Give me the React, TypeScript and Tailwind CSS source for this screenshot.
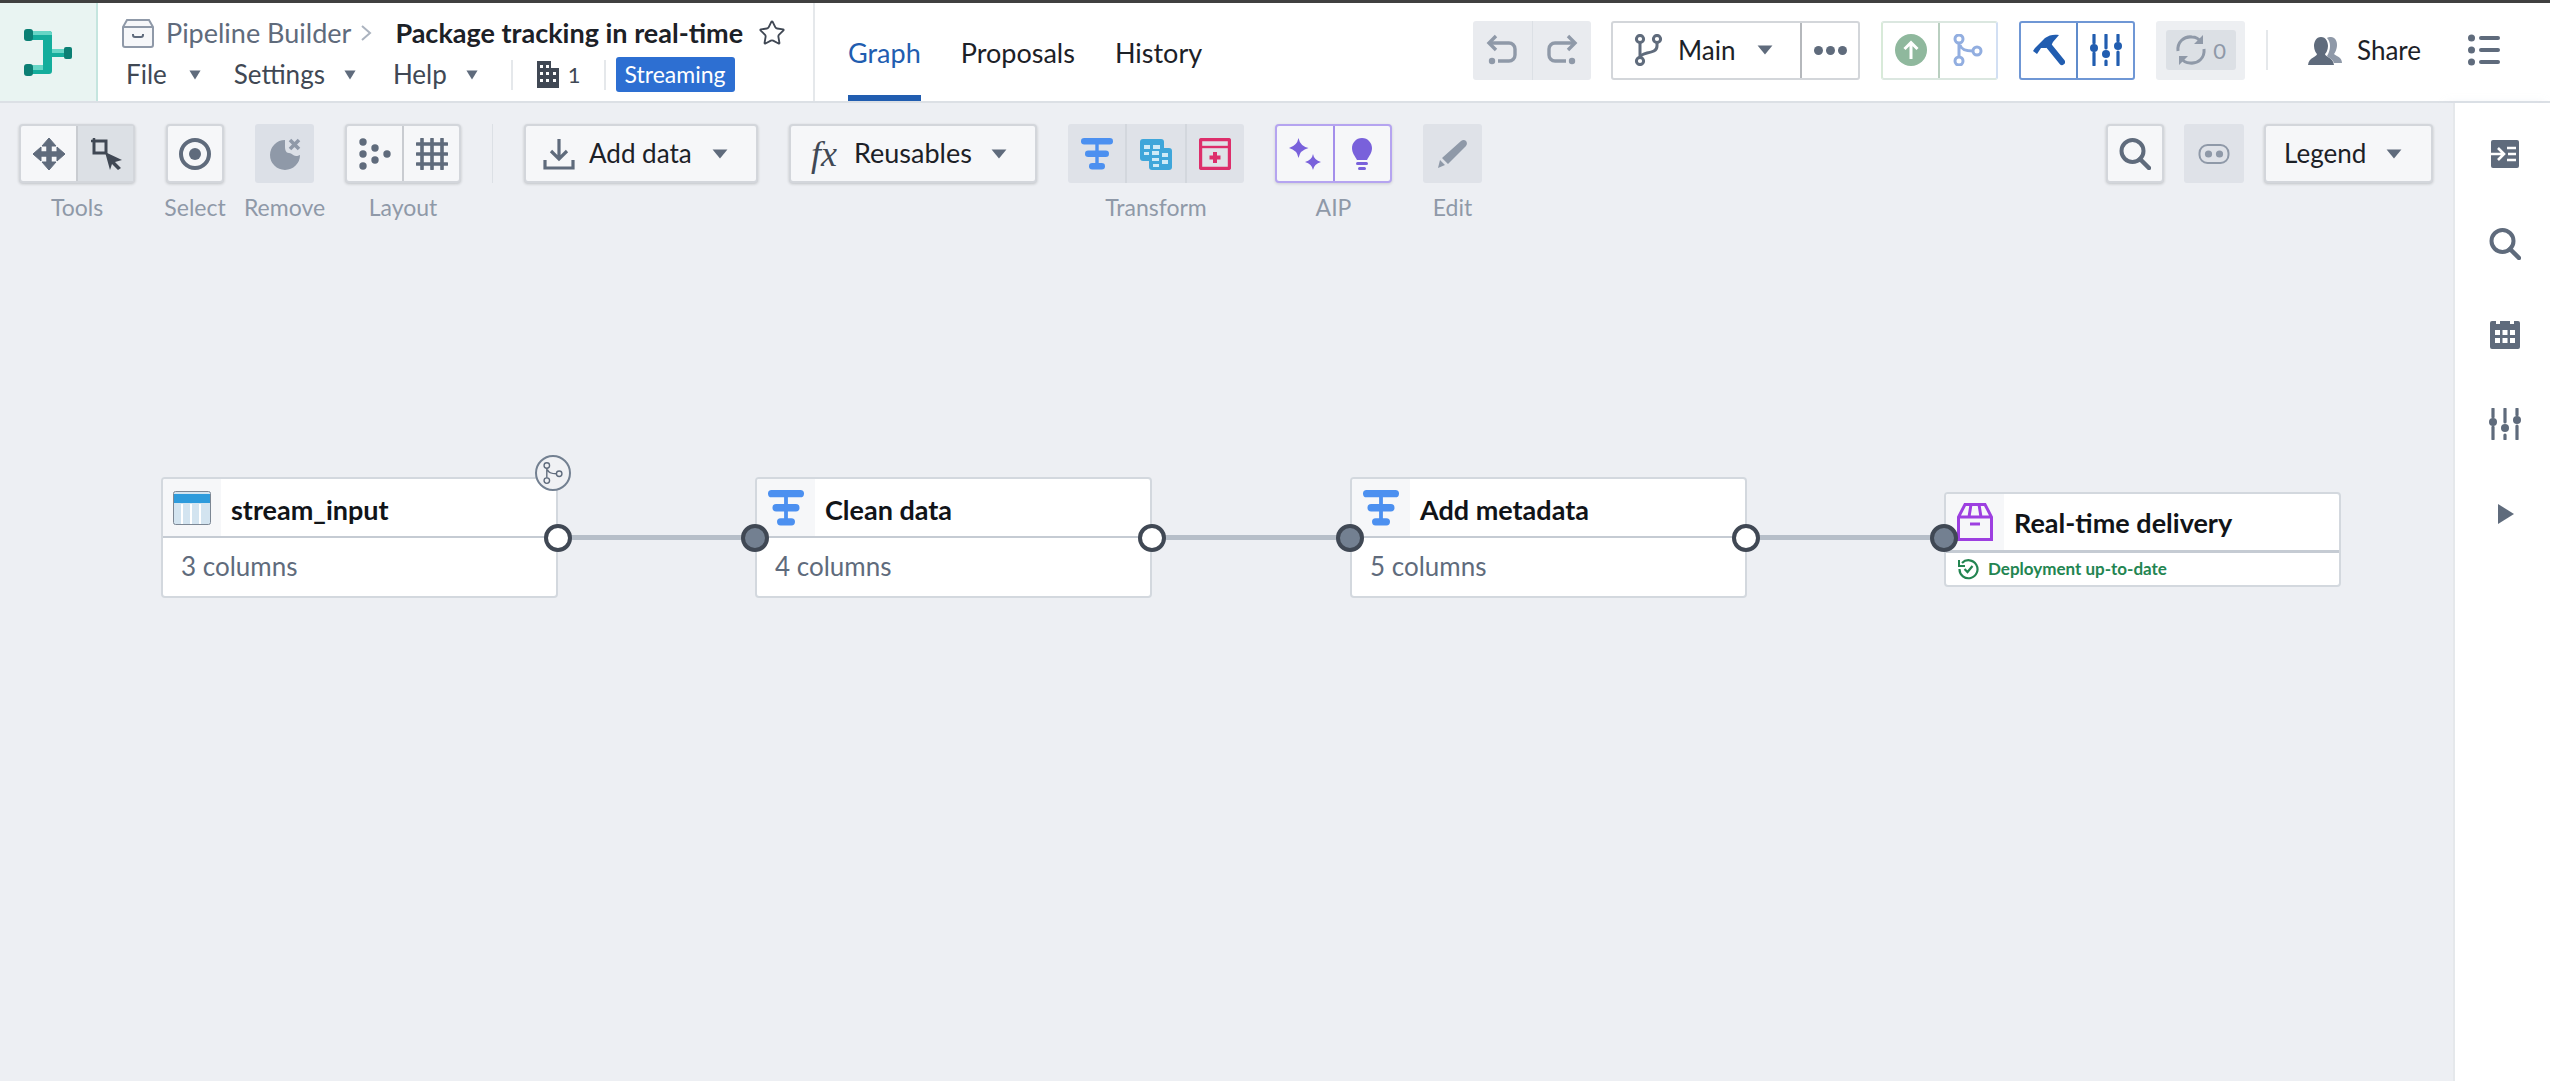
import { Star } from 'lucide-react'
import type { ReactNode } from 'react'

const SLATE = '#5f6b7c'

function Caret({ className = '', color = SLATE }: { className?: string; color?: string }) {
  return (
    <svg width="16" height="10" viewBox="0 0 14 10" preserveAspectRatio="none" className={className}>
      <path d="M0.5 0.5h13L7 9.5z" fill={color} />
    </svg>
  )
}

/* icons drawn by hand, all on a 32 box unless noted */
function Ico({ children, size = 32, box = 32, className = '' }: { children: ReactNode; size?: number; box?: number; className?: string }) {
  return (
    <svg width={size} height={size} viewBox={`0 0 ${box} ${box}`} className={className}>
      {children}
    </svg>
  )
}

function Logo() {
  return (
    <svg width="48" height="47" viewBox="0 0 48 47">
      <path d="M8 2h17a3 3 0 0 1 3 3v37a3 3 0 0 1-3 3H8v-9h11V11H8z" fill="#14ad9c" />
      <path d="M8 2h17a3 3 0 0 1 3 3v1H8zM8 36h11v5H8z" fill="#66d6c6" />
      <path d="M28 20h12v4H28z" fill="#66d6c6" />
      <path d="M28 24h12v4H28z" fill="#14ad9c" />
      <rect x="0" y="0" width="9" height="12" rx="3" fill="#0b7f74" />
      <rect x="0" y="35" width="9" height="12" rx="3" fill="#0b7f74" />
      <rect x="40" y="18" width="8" height="12" rx="2" fill="#0b7f74" />
    </svg>
  )
}

function BoxCrumb() {
  return (
    <svg width="32" height="29" viewBox="0 0 32 29">
      <path d="M5 1h22l4 7v18a2 2 0 0 1-2 2H3a2 2 0 0 1-2-2V8z" fill="#f6f7f9" stroke="#8f99a8" strokeWidth="2" />
      <path d="M1 8h30" stroke="#8f99a8" strokeWidth="2" />
      <path d="M11 15v1a2 2 0 0 0 2 2h6a2 2 0 0 0 2-2v-1" fill="none" stroke="#5f6b7c" strokeWidth="2" />
    </svg>
  )
}

function Building() {
  return (
    <svg width="24" height="29" viewBox="0 0 24 29">
      <path d="M1 1h14v7h8v20H1z" fill="#404854" />
      <path d="M4 5h3v3H4zM10 5h3v3h-3zM4 12h3v3H4zM10 12h3v3h-3zM17 12h3v3h-3zM4 19h3v3H4zM10 19h3v3h-3zM17 19h3v3h-3z" fill="#fff" />
    </svg>
  )
}

function Move() {
  return (
    <Ico>
      <path d="M16 0l7 8H9zM16 32l-7-8h14zM0 16l8-7v14zM32 16l-8 7V9z" fill={SLATE} stroke={SLATE} strokeLinejoin="round" />
      <path d="M16 6v20M6 16h20" stroke={SLATE} strokeWidth="5.5" />
    </Ico>
  )
}

function SelectTool() {
  return (
    <Ico>
      <path d="M1 3h3M4 0v3" stroke="#404854" strokeWidth="2.5" />
      <rect x="4" y="3" width="12" height="12" fill="none" stroke="#404854" strokeWidth="3" />
      <path d="M15 14l17 8-7 2 6 6-3 2-6-6-2 6z" fill="#404854" />
    </Ico>
  )
}

function Target() {
  return (
    <Ico>
      <circle cx="16" cy="16" r="14" fill="none" stroke={SLATE} strokeWidth="4" />
      <circle cx="16" cy="16" r="6" fill={SLATE} />
    </Ico>
  )
}

function RemoveIco() {
  return (
    <Ico>
      <path d="M16 2A15 15 0 1 0 31 17c-1 .5-2.5 1-4 1-3 0-4-3-7-3-4 0-4-5-4-7z" fill="#8f99a8" />
      <path d="M21 2l9 9M30 2l-9 9" stroke="#8f99a8" strokeWidth="3.6" />
    </Ico>
  )
}

function Scatter() {
  return (
    <Ico>
      {[[4, 4], [4, 16], [4, 28], [16, 10], [16, 22], [28, 16]].map(([x, y]) => (
        <circle key={`${x}-${y}`} cx={x} cy={y} r="3.7" fill={SLATE} />
      ))}
    </Ico>
  )
}

function GridIco() {
  return (
    <Ico>
      <path d="M6 1v30M16 1v30M26 1v30M1 6h30M1 16h30M1 26h30" stroke={SLATE} strokeWidth="3.6" strokeLinecap="round" />
    </Ico>
  )
}

function Download() {
  return (
    <Ico>
      <path d="M16 1v20M8 13l8 8 8-8" fill="none" stroke={SLATE} strokeWidth="3.2" />
      <path d="M2 22v8h28v-8" fill="none" stroke={SLATE} strokeWidth="3.2" />
    </Ico>
  )
}

function Transform({ color = '#4c90f0', size = 32 }: { color?: string; size?: number }) {
  return (
    <Ico size={size}>
      <rect x="0" y="0" width="32" height="6.5" rx="3.2" fill={color} />
      <rect x="4" y="12.5" width="24" height="6.5" rx="3.2" fill={color} />
      <rect x="8" y="25" width="16" height="6.5" rx="3.2" fill={color} />
      <path d="M16 4v24" stroke={color} strokeWidth="3.4" />
    </Ico>
  )
}

function TableStack() {
  return (
    <Ico>
      <rect x="0" y="1" width="24" height="22" rx="3" fill="#3fa6da" />
      <rect x="9" y="10" width="23" height="22" rx="3" fill="#3fa6da" />
      <path d="M4 7h6v4H4zM13 7h7v4h-7zM4 14h5v3H4zM12 13h7v4h-7zM22 15h6v4h-6zM12 20h7v3h-7zM22 22h6v4h-6zM13 26h6v3h-6z" fill="#cfeaf7" />
    </Ico>
  )
}

function AddCol() {
  return (
    <Ico>
      <rect x="1.5" y="1.5" width="29" height="29" rx="1.5" fill="none" stroke="#dd2e6b" strokeWidth="3.4" />
      <path d="M1 9h30" stroke="#dd2e6b" strokeWidth="2.4" />
      <path d="M16 14v11M10.5 19.5h11" stroke="#dd2e6b" strokeWidth="4" />
    </Ico>
  )
}

function Sparkles() {
  return (
    <Ico>
      <path d="M9.5 0Q11 8 19.5 10 11 12 9.5 20 8 12 -.5 10 8 8 9.5 0z" fill="#7961db" />
      <path d="M24 16q1 6 8 8-7 2-8 8-1-6-8-8 7-2 8-8z" fill="#7961db" />
    </Ico>
  )
}

function Bulb() {
  return (
    <Ico>
      <path d="M16 0c6 0 10 5 10 10 0 5-3 8-5 12H11C9 18 6 15 6 10 6 5 10 0 16 0z" fill="#7961db" />
      <rect x="10" y="24" width="12" height="3" rx="1.5" fill="#7961db" />
      <rect x="12" y="29" width="8" height="3" rx="1.5" fill="#7961db" />
    </Ico>
  )
}

function Pencil() {
  return (
    <Ico>
      <path d="M24 3c2-1.5 4-1 5 0s1.5 3 0 5L11 26l-6-6zM3 22l5 5-7 3z" fill="#8f99a8" />
    </Ico>
  )
}

function SearchIco({ color = SLATE }: { color?: string }) {
  return (
    <Ico>
      <circle cx="13.5" cy="13" r="11" fill="none" stroke={color} strokeWidth="4" />
      <path d="M21 21l9 9" stroke={color} strokeWidth="4.5" strokeLinecap="round" />
    </Ico>
  )
}

function Pill() {
  return (
    <Ico>
      <rect x="1.5" y="7" width="29" height="18" rx="8" fill="none" stroke="#8f99a8" strokeWidth="2" />
      <circle cx="10.5" cy="16" r="3.6" fill="#8f99a8" />
      <circle cx="21.5" cy="16" r="3.6" fill="#8f99a8" />
    </Ico>
  )
}

function Undo({ flip = false }: { flip?: boolean }) {
  return (
    <Ico className={flip ? '-scale-x-100' : ''}>
      <path d="M10 2L3 9l7 7" fill="none" stroke="#8f99a8" strokeWidth="3.4" />
      <path d="M4 9h19a6 6 0 0 1 6 6v6a6 6 0 0 1-6 6H12" fill="none" stroke="#8f99a8" strokeWidth="3.4" />
      <circle cx="6" cy="27" r="3.2" fill="#8f99a8" />
    </Ico>
  )
}

function BranchIco() {
  return (
    <Ico>
      <circle cx="7" cy="5" r="3.6" fill="none" stroke={SLATE} strokeWidth="3" />
      <circle cx="7" cy="27" r="3.6" fill="none" stroke={SLATE} strokeWidth="3" />
      <circle cx="24" cy="5" r="3.6" fill="none" stroke={SLATE} strokeWidth="3" />
      <path d="M7 9v14M24 9v3c0 5-5 6-10 7-4 1-7 2-7 5" fill="none" stroke={SLATE} strokeWidth="3" />
    </Ico>
  )
}

function Lineage({ color, size = 32, stroke = 3 }: { color: string; size?: number; stroke?: number }) {
  return (
    <Ico size={size}>
      <circle cx="7" cy="5" r="4" fill="none" stroke={color} strokeWidth={stroke} />
      <circle cx="7" cy="27" r="4" fill="none" stroke={color} strokeWidth={stroke} />
      <circle cx="25" cy="17" r="4" fill="none" stroke={color} strokeWidth={stroke} />
      <path d="M7 9v14M8 11c1 4 5 6 13 6" fill="none" stroke={color} strokeWidth={stroke} />
    </Ico>
  )
}

function UpCircle() {
  return (
    <Ico>
      <circle cx="16" cy="16" r="16" fill="#8fb89d" />
      <path d="M16 25V9M9.5 15L16 8.5l6.5 6.5" fill="none" stroke="#fff" strokeWidth="3" />
    </Ico>
  )
}

function Hammer() {
  return (
    <Ico>
      <path d="M0 17l2-3L12 4C16 1 21 0 26 1L20 8 18 12 13 14H8L4 20z" fill="#215db0" />
      <path d="M16 12l13 16" stroke="#215db0" strokeWidth="6" strokeLinecap="round" />
    </Ico>
  )
}

function Sliders({ color = '#215db0' }: { color?: string }) {
  return (
    <Ico>
      <path d="M4 1v8M4 19v12M16 1v13M16 27v4M28 1v6M28 18v13" stroke={color} strokeWidth="3.2" strokeLinecap="round" />
      <circle cx="4" cy="14" r="4" fill={color} />
      <circle cx="16" cy="20" r="4" fill={color} />
      <circle cx="28" cy="12" r="4" fill={color} />
    </Ico>
  )
}

function Sync() {
  return (
    <Ico>
      <path d="M3 17C2 8 9 2 17 3c4 0 7 2 9 5" fill="none" stroke="#8f99a8" strokeWidth="3" />
      <path d="M29 15c1 9-6 15-14 14-4 0-7-2-9-5" fill="none" stroke="#8f99a8" strokeWidth="3" />
      <path d="M28 1v9h-9zM4 31v-9h9z" fill="#8f99a8" />
    </Ico>
  )
}

function People() {
  return (
    <svg width="34" height="30" viewBox="0 0 34 30">
      <path d="M23 2c4 0 6 4 6 8s-2 8-3 9c2 2 8 3 8 9H26c-1-4-5-5-7-7 2-3 3-7 3-10 0-3-1-6-3-8 1-1 2-1 4-1z" fill="#8f99a8" />
      <path d="M13 2c5 0 7 5 7 9s-2 7-3 8c0 3 8 3 9 11H0c1-8 9-8 9-11-1-1-3-4-3-8s2-9 7-9z" fill={SLATE} />
    </svg>
  )
}

function ListIco() {
  return (
    <Ico>
      {[4, 16, 28].map(y => (
        <g key={y}>
          <circle cx="3.5" cy={y} r="3.5" fill={SLATE} />
          <rect x="11" y={y - 2} width="21" height="4" rx="2" fill={SLATE} />
        </g>
      ))}
    </Ico>
  )
}

function InboxSide() {
  return (
    <Ico>
      <rect x="2" y="2" width="28" height="28" rx="2" fill={SLATE} />
      <path d="M0 16h14M9 10l6 6-6 6" fill="none" stroke="#fff" strokeWidth="2.6" />
      <path d="M18 10h9M19 16h8M18 22h9" stroke="#fff" strokeWidth="2.6" />
    </Ico>
  )
}

function Calendar() {
  return (
    <Ico>
      <path d="M3 3h4v3h4V3h10v3h4V3h4a2 2 0 0 1 2 2v24a2 2 0 0 1-2 2H3a2 2 0 0 1-2-2V5a2 2 0 0 1 2-2z" fill={SLATE} />
      <path d="M6 12h5v5H6zM13.5 12h5v5h-5zM21 12h5v5h-5zM6 20h5v5H6zM13.5 20h5v5h-5zM21 20h5v5h-5z" fill="#fff" />
    </Ico>
  )
}

function TableNode() {
  return (
    <svg width="38" height="34" viewBox="0 0 38 34">
      <rect x="0.5" y="0.5" width="37" height="33" rx="2" fill="#d3e4f0" stroke="#7c8794" />
      <rect x="1" y="3" width="36" height="9" fill="#2d9bdc" />
      <path d="M9 13v20M18 13v20M27 13v20" stroke="#fff" strokeWidth="2" />
    </svg>
  )
}

function Package() {
  return (
    <svg width="36" height="38" viewBox="0 0 36 38">
      <path d="M8 1.5h20L34.5 14v22.5h-33V14zM1.5 14h33M14 1.5l-2 12.5M22 1.5l2 12.5" fill="none" stroke="#9d3fe0" strokeWidth="3" />
      <path d="M13 21h10" stroke="#9d3fe0" strokeWidth="3" />
    </svg>
  )
}

function DeployOk() {
  return (
    <svg width="21" height="22" viewBox="0 0 21 22">
      <path d="M4 5a9 9 0 1 1-2.5 6" fill="none" stroke="#238551" strokeWidth="2.2" />
      <path d="M1 2v6h6" fill="none" stroke="#238551" strokeWidth="2" />
      <path d="M6.5 11l3 3 5-6" fill="none" stroke="#238551" strokeWidth="2.2" />
    </svg>
  )
}

const RAISED = 'border-2 border-[#d3d6db] bg-[#f6f7f9] shadow-[0_1px_3px_rgba(17,20,24,0.2)] rounded-[4px]'

function Cell({ children, last = false, active = false, divide = 'border-[#c9ccd1]' }: { children: ReactNode; last?: boolean; active?: boolean; divide?: string }) {
  return (
    <div className={`flex h-full flex-1 items-center justify-center ${last ? '' : `border-r-2 ${divide}`} ${active ? 'bg-[#dce0e5]' : ''}`}>
      {children}
    </div>
  )
}

function Group({ label, children }: { label: string; children: ReactNode }) {
  return (
    <div className="flex flex-col items-center">
      {children}
      <div className="mt-[10px] flex h-[28px] w-0 justify-center whitespace-nowrap text-[23px] leading-[28px] text-[#8f99a8]">{label}</div>
    </div>
  )
}

function DropBtn({ children, caretClass, width }: { children: ReactNode; caretClass: string; width: string }) {
  return (
    <div className={`flex h-[59px] items-center ${RAISED} ${width}`}>
      {children}
      <Caret className={caretClass} />
    </div>
  )
}

function Port({ x, y, filled }: { x: number; y: number; filled?: boolean }) {
  return (
    <div
      className={`absolute h-[28px] w-[28px] -translate-x-1/2 -translate-y-1/2 rounded-full border-4 border-[#404854] ${filled ? 'bg-[#738091]' : 'bg-white'}`}
      style={{ left: x, top: y }}
    />
  )
}

const NODES = [
  { x: 161, title: 'stream_input', sub: '3 columns', icon: <TableNode /> },
  { x: 755, title: 'Clean data', sub: '4 columns', icon: <Transform size={36} /> },
  { x: 1350, title: 'Add metadata', sub: '5 columns', icon: <Transform size={36} /> },
]

function GraphNode({ x, title, sub, icon }: { x: number; title: string; sub: string; icon: ReactNode }) {
  return (
    <div className="absolute top-[374px] h-[121px] w-[397px] overflow-hidden rounded-[4px] border-2 border-[#d3d8de] bg-white" style={{ left: x }}>
      <div className="flex h-[59px] items-center border-b-2 border-[#c5cbd3]">
        <div className="flex h-full w-[58px] items-center justify-center bg-[#f6f7f9]">{icon}</div>
        <span className="ml-[10px] pt-[5px] text-[27px] font-bold text-[#111418]">{title}</span>
      </div>
      <div className="pl-[18px] pt-[12px] text-[26px] leading-[32px] text-[#5f6b7c]">{sub}</div>
    </div>
  )
}

export default function App() {
  return (
    <div className="flex h-[1081px] w-[2550px] flex-col overflow-hidden bg-white text-[#1c2127] [font-family:Lato,sans-serif]">
      <div className="h-[3px] bg-[#404040]" />

      {/* Header */}
      <header className="flex h-[100px] shrink-0 border-b-2 border-[#dce0e5] bg-white">
        <div className="flex w-[98px] items-center justify-center border-r-2 border-[#c5e5df] bg-[#e9f4f2] pr-[1px]">
          <Logo />
        </div>

        <div className="flex w-[717px] flex-col border-r-2 border-[#e5e8eb] pl-[24px]">
          <div className="mt-[15px] flex h-[30px] items-center">
            <BoxCrumb />
            <span className="ml-[12px] text-[27px] text-[#5f6b7c]">Pipeline Builder</span>
            <svg width="11" height="16" viewBox="0 0 11 16" className="ml-[10px]">
              <path d="M1 1l8 7-8 7" fill="none" stroke="#abb3bf" strokeWidth="2" />
            </svg>
            <span className="ml-[23px] text-[27px] font-bold text-[#1c2127]">Package tracking in real-time</span>
            <Star className="ml-[15px] h-[28px] w-[28px] text-[#404854]" strokeWidth={1.6} />
          </div>
          <div className="mt-[9px] flex h-[35px] items-center pl-[4px] text-[26px] text-[#404854]">
            <span>File</span>
            <Caret className="ml-[22px] w-[12px]" />
            <span className="ml-[33px]">Settings</span>
            <Caret className="ml-[19px] w-[12px]" />
            <span className="ml-[37px]">Help</span>
            <Caret className="ml-[19px] w-[12px]" />
            <div className="ml-[33px] h-[30px] w-[2px] bg-[#e5e8eb]" />
            <span className="ml-[23px]"><Building /></span>
            <span className="ml-[8px] text-[22px]">1</span>
            <div className="ml-[23px] h-[30px] w-[2px] bg-[#e5e8eb]" />
            <span className="ml-[10px] flex h-[35px] w-[119px] items-center justify-center rounded-[3px] bg-[#2d6fd2] text-[23px] text-white">Streaming</span>
          </div>
        </div>

        <nav className="flex items-stretch gap-[40px] pl-[33px] text-[27px]">
          {['Graph', 'Proposals', 'History'].map(tab => (
            <div key={tab} className={`flex items-center ${tab === 'Graph' ? 'border-b-[6px] border-[#215db0] pt-[8px] text-[#215db0]' : 'pt-[2px] text-[#1c2127]'}`}>
              {tab}
            </div>
          ))}
        </nav>

        <div className="ml-auto flex items-center pb-[4px] pr-[50px]">
          <div className="flex h-[59px] w-[118px] rounded-[3px] bg-[#e9ebef]">
            <div className="flex flex-1 items-center justify-center border-r border-[#dce0e5]"><Undo /></div>
            <div className="flex flex-1 items-center justify-center"><Undo flip /></div>
          </div>

          <div className="ml-[20px] flex h-[59px] w-[249px] rounded-[3px] border-2 border-[#d3d6da] bg-white">
            <div className="flex w-[189px] items-center border-r-2 border-[#b5b8bc] pl-[20px]">
              <BranchIco />
              <span className="ml-[13px] text-[26px]">Main</span>
              <Caret className="ml-[22px]" />
            </div>
            <div className="flex flex-1 items-center justify-center gap-[3px]">
              {[0, 1, 2].map(i => <span key={i} className="h-[9px] w-[9px] rounded-full bg-[#5f6b7c]" />)}
            </div>
          </div>

          <div className="ml-[21px] flex h-[59px] w-[117px] rounded-[3px] border-2 border-r-[#d2dff3] border-y-[#dbe7e0] border-l-[#d8ead9] bg-white">
            <div className="flex w-[57px] items-center justify-center border-r-2 border-[#b9cfc0]"><UpCircle /></div>
            <div className="flex flex-1 items-center justify-center"><Lineage color="#92aee0" /></div>
          </div>

          <div className="ml-[21px] flex h-[59px] w-[116px] rounded-[3px] border-2 border-[#6f97d5] bg-white">
            <div className="flex w-[57px] items-center justify-center border-r-2 border-[#5f8bcb]"><Hammer /></div>
            <div className="flex flex-1 items-center justify-center"><Sliders /></div>
          </div>

          <div className="ml-[21px] flex h-[59px] w-[89px] items-center justify-center rounded-[3px] bg-[#edeff2]">
            <div className="flex h-[40px] w-[70px] items-center justify-center gap-[6px] rounded-[3px] bg-[#dce0e5] text-[22px] text-[#8f99a8]">
              <Sync />
              <span>0</span>
            </div>
          </div>

          <div className="ml-[21px] h-[40px] w-[2px] bg-[#e5e8eb]" />

          <div className="ml-[40px]"><People /></div>
          <span className="ml-[15px] text-[26px]">Share</span>
          <div className="ml-[47px]"><ListIco /></div>
        </div>
      </header>

      <div className="flex min-h-0 flex-1">
        {/* Canvas */}
        <main className="relative min-w-0 flex-1 bg-[#edeff3]">
          <div className="flex items-start pl-[19px] pr-[20px] pt-[21px]">
            <div className="flex items-start gap-[31px]">
              <Group label="Tools">
                <div className={`flex h-[59px] w-[116px] ${RAISED}`}>
                  <Cell><Move /></Cell>
                  <Cell last active><SelectTool /></Cell>
                </div>
              </Group>
              <Group label="Select">
                <div className={`flex h-[59px] w-[58px] items-center justify-center ${RAISED}`}><Target /></div>
              </Group>
              <Group label="Remove">
                <div className="flex h-[59px] w-[59px] items-center justify-center rounded-[3px] bg-[#dce0e7]"><RemoveIco /></div>
              </Group>
              <Group label="Layout">
                <div className={`flex h-[59px] w-[116px] ${RAISED}`}>
                  <Cell><Scatter /></Cell>
                  <Cell last><GridIco /></Cell>
                </div>
              </Group>
              <div className="h-[59px] w-[1px] bg-[#dce0e5]" />
              <DropBtn width="w-[234px]" caretClass="ml-[20px]">
                <span className="ml-[17px]"><Download /></span>
                <span className="ml-[14px] text-[26px] text-[#1c2127]">Add data</span>
              </DropBtn>
              <DropBtn width="w-[248px]" caretClass="ml-[19px]">
                <span className="ml-[20px] text-[36px] leading-none italic text-[#404854] [font-family:'Liberation_Serif',serif]">fx</span>
                <span className="ml-[17px] text-[27px] text-[#1c2127]">Reusables</span>
              </DropBtn>
              <Group label="Transform">
                <div className="flex h-[59px] w-[176px] rounded-[3px] bg-[#dfe2e8]">
                  <Cell divide="border-[#d3d7dd]"><Transform /></Cell>
                  <Cell divide="border-[#d3d7dd]"><TableStack /></Cell>
                  <Cell last><AddCol /></Cell>
                </div>
              </Group>
              <Group label="AIP">
                <div className="flex h-[59px] w-[117px] rounded-[4px] border-2 border-[#b5a4f0] bg-[#f6f7f9] shadow-[0_1px_3px_rgba(17,20,24,0.15)]">
                  <Cell divide="border-[#a48feb]"><Sparkles /></Cell>
                  <Cell last><Bulb /></Cell>
                </div>
              </Group>
              <Group label="Edit">
                <div className="flex h-[59px] w-[59px] items-center justify-center rounded-[3px] bg-[#dfe2e8]"><Pencil /></div>
              </Group>
            </div>

            <div className="ml-auto flex items-start gap-[20px]">
              <div className={`flex h-[59px] w-[58px] items-center justify-center ${RAISED}`}><SearchIco /></div>
              <div className="flex h-[59px] w-[60px] items-center justify-center rounded-[3px] bg-[#dfe2e8]"><Pill /></div>
              <DropBtn width="w-[169px]" caretClass="ml-[20px]">
                <span className="ml-[18px] text-[26px] text-[#1c2127]">Legend</span>
              </DropBtn>
            </div>
          </div>

          {/* Edges */}
          {[[558, 198], [1152, 198], [1746, 198]].map(([x, w]) => (
            <div key={x} className="absolute top-[432px] h-[5px] bg-[#b6bec8]" style={{ left: x, width: w }} />
          ))}

          {NODES.map(n => <GraphNode key={n.title} x={n.x} title={n.title} sub={n.sub} icon={n.icon} />)}

          <div className="absolute left-[1944px] top-[389px] h-[95px] w-[397px] overflow-hidden rounded-[4px] border-2 border-[#d3d8de] bg-white">
            <div className="flex h-[59px] items-center border-b-[3px] border-[#c5cbd3]">
              <div className="flex h-full w-[58px] items-center justify-center bg-[#f6f7f9]"><Package /></div>
              <span className="ml-[10px] pt-[2px] text-[27px] font-bold text-[#111418]">Real-time delivery</span>
            </div>
            <div className="flex h-[32px] items-center pl-[12px] text-[17px] font-bold text-[#238551]">
              <DeployOk />
              <span className="ml-[9px]">Deployment up-to-date</span>
            </div>
          </div>

          <Port x={558} y={434.5} />
          <Port x={755} y={434.5} filled />
          <Port x={1152} y={434.5} />
          <Port x={1350} y={434.5} filled />
          <Port x={1746} y={434.5} />
          <Port x={1944} y={435} filled />

          <div className="absolute left-[535px] top-[352px] flex h-[36px] w-[36px] items-center justify-center rounded-full border-2 border-[#738091] bg-[#f0f1f4]">
            <Lineage color="#5f6b7c" size={22} stroke={2} />
          </div>
        </main>

        {/* Right rail */}
        <aside className="flex w-[97px] shrink-0 flex-col items-center gap-[58px] border-l-2 border-[#e5e8eb] bg-white pl-[4px] pt-[35px] shadow-[-6px_0_8px_rgba(210,215,225,0.35)]">
          <InboxSide />
          <SearchIco />
          <Calendar />
          <Sliders color={SLATE} />
          <svg width="32" height="32" viewBox="0 0 32 32"><path d="M9 6l16 10-16 10z" fill={SLATE} /></svg>
        </aside>
      </div>
    </div>
  )
}
